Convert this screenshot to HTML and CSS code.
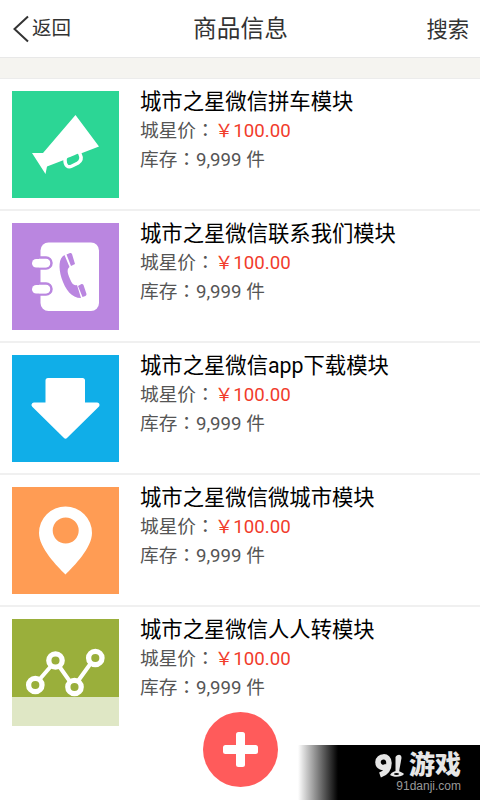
FILE: index.html
```html
<!DOCTYPE html>
<html lang="zh-CN">
<head>
<meta charset="utf-8">
<title>商品信息</title>
<link rel="stylesheet" href="styles.css">
</head>
<body>
<div class="app">
  <header class="bar">
    <div class="back">
      <svg class="chevron" width="18" height="28" viewBox="0 0 18 28"><path d="M16 1.500 2.500 14 16 26.500" fill="none" stroke="#333" stroke-width="2"/></svg>
      <span>返回</span>
    </div>
    <h1 class="title">商品信息</h1>
    <div class="search">搜索</div>
  </header>
  <div class="gap"></div>
  <main class="list">
    <article class="item">
      <svg class="thumb green" viewBox="0 0 107 107"><path fill="#fff" d="M63.500 24 87 55.500 35 75.500 33.500 83 20 62H31Z"/><path d="M53 69c0 6 3 8 7 6l6-3c3-2 4-5 2-9-1-3-3-2-7 0-5 2-8 2-8 6Z" fill="#2cd695" stroke="#fff" stroke-width="3.500"/></svg>
      <div class="info"><h2 class="name">城市之星微信拼车模块</h2><p class="line">城星价<span class="colon" lang="zh-TW">：</span><span class="price">￥100.00</span></p><p class="line">库存<span class="colon" lang="zh-TW">：</span>9,999 件</p></div>
    </article>
    <article class="item">
      <svg class="thumb purple" viewBox="0 0 107 107"><rect x="28.500" y="19.500" width="58.500" height="68.500" rx="8" fill="#fff"/><g fill="#fff" stroke="#ba86e0" stroke-width="2.500"><path d="M27 34.500h7a5.500 5.500 0 0 1 0 11h-7"/><path d="M27 60.500h7a5.500 5.500 0 0 1 0 11h-7"/></g><rect x="20" y="36" width="18" height="8.500" rx="4.250" fill="#fff"/><rect x="20" y="62" width="18" height="8.500" rx="4.250" fill="#fff"/><g fill="#ba86e0"><path d="M52.500 32c-6 3-6 13-3 23 4 12 10 20 19.500 20L65 62c-3 1-5-1-7-6-3-7-3-10-.5-12Z"/><path d="m54.500 31.500 3.500-1.500c1 0 1.500 0 2 1l3 10-4 2ZM66 63l3.500-2c1 0 1.500 0 2 1l3 9c0 1-.5 1.500-1 2l-3 1Z"/></g></svg>
      <div class="info"><h2 class="name">城市之星微信联系我们模块</h2><p class="line">城星价<span class="colon" lang="zh-TW">：</span><span class="price">￥100.00</span></p><p class="line">库存<span class="colon" lang="zh-TW">：</span>9,999 件</p></div>
    </article>
    <article class="item">
      <svg class="thumb blue" viewBox="0 0 107 107"><path d="M36 25.500H70.500V50H85L53.500 81 22 50H36Z" fill="#fff" stroke="#fff" stroke-width="5" stroke-linejoin="round"/></svg>
      <div class="info"><h2 class="name">城市之星微信app下载模块</h2><p class="line">城星价<span class="colon" lang="zh-TW">：</span><span class="price">￥100.00</span></p><p class="line">库存<span class="colon" lang="zh-TW">：</span>9,999 件</p></div>
    </article>
    <article class="item">
      <svg class="thumb orange" viewBox="0 0 107 107"><path fill="#fff" fill-rule="evenodd" d="M53.500 87.500C45 79 27 61 27 46a26.500 26.500 0 0 1 53 0C80 61 62 79 53.500 87.500ZM53.700 30.500a13 13 0 1 0 0 26 13 13 0 1 0 0-26Z"/></svg>
      <div class="info"><h2 class="name">城市之星微信微城市模块</h2><p class="line">城星价<span class="colon" lang="zh-TW">：</span><span class="price">￥100.00</span></p><p class="line">库存<span class="colon" lang="zh-TW">：</span>9,999 件</p></div>
    </article>
    <article class="item">
      <svg class="thumb olive" viewBox="0 0 107 107"><rect y="78" width="107" height="29" fill="#dfe7c5"/><g fill="none" stroke="#fff"><path stroke-width="4" d="m27 61 13-15M47 47l12 17M66 62l13-18"/><g stroke-width="5.300"><circle cx="23.300" cy="66" r="6.700"/><circle cx="43.500" cy="41.500" r="6.700"/><circle cx="62.500" cy="68" r="6.700"/><circle cx="83.300" cy="39" r="6.700"/></g></g></svg>
      <div class="info"><h2 class="name">城市之星微信人人转模块</h2><p class="line">城星价<span class="colon" lang="zh-TW">：</span><span class="price">￥100.00</span></p><p class="line">库存<span class="colon" lang="zh-TW">：</span>9,999 件</p></div>
    </article>
  </main>
  <div class="add"><svg width="75" height="75" viewBox="0 0 75 75"><circle cx="37.500" cy="37.500" r="37.500" fill="#ff5b5b"/><rect x="33" y="20" width="9" height="35" rx="2.500" fill="#fff"/><rect x="20" y="33" width="35" height="9" rx="2.500" fill="#fff"/></svg></div>
  <div class="mark">
    <div class="brand">
      <svg width="31" height="24" viewBox="0 0 31 24"><g fill="none" stroke="#e6e6e6" stroke-width="5.500"><path d="M13 12c-4 3-9 1-9-4 0-6 11-8 11 1 0 6-3 10-9 12"/></g><path d="M21.500 3c2-3 6-3 6 1L25 18h-3.500Z" fill="#e6e6e6"/><path d="M16 21c2-3 4-4 7-4s6 2 7 3c-2 3-10 4-14 1Z" fill="#e6e6e6"/><ellipse cx="22.500" cy="20" rx="2.500" ry="1" fill="#000"/></svg>
      <span>游戏</span>
    </div>
    <div class="site">91danji.com</div>
  </div>
</div>
</body>
</html>
```
FILE: styles.css
```css
* { box-sizing: border-box; margin: 0; padding: 0; }
body { background: #fff; font-family: Roboto, "Noto Sans CJK SC", sans-serif; }
.app { position: relative; width: 480px; height: 800px; overflow: hidden; }
svg { display: block; flex: none; }
.bar {
  display: grid;
  grid-template-columns: 1fr auto 1fr;
  align-items: center;
  height: 57px;
  padding: 0 11px 0 12px;
  color: #333;
}
.back { display: flex; align-items: center; gap: 2px; font-size: 19.5px; line-height: 28px; }
.back span { padding-top: 1px; }
.title { font-size: 23.7px; font-weight: 400; line-height: 34px; }
.search { justify-self: end; font-size: 21.3px; line-height: 30px; padding-top: 2px; }
.gap { height: 22px; background: #f5f4f0; border-top: 1px solid #e8e8e8; border-bottom: 1px solid #ececec; }
.item { display: flex; gap: 21px; height: 132px; padding: 12px 12px 0; border-bottom: 2px solid #f0f0f0; }
.item:last-child { border-bottom: 0; }
.thumb { width: 107px; height: 107px; }
.green { background: #2cd695; }
.purple { background: #ba86e0; }
.blue { background: #10aee8; }
.orange { background: #ff9c54; }
.olive { background: #9aaf3b; }
.name { margin-top: -4px; color: #000; font-size: 21.33px; font-weight: 400; line-height: 30px; white-space: nowrap; }
.line { color: #555; font-size: 18.67px; line-height: 29px; white-space: nowrap; }
.colon { font-family: "Noto Sans CJK TC", sans-serif; line-height: 1; }
.price { color: #f13c2b; }
.add { position: absolute; left: 203px; top: 712px; }
.mark {
  position: absolute;
  right: 0;
  bottom: 0;
  width: 182px;
  height: 55px;
  padding: 8px 19px 0 0;
  background: linear-gradient(90deg, #fff 0, #000 40px);
  display: flex;
  flex-direction: column;
  align-items: flex-end;
}
.brand { display: flex; align-items: center; gap: 4px; height: 25px; color: #e6e6e6; font-size: 26px; font-weight: 900; line-height: 25px; }
.site { color: #999; font-family: "Liberation Sans", sans-serif; font-size: 12px; line-height: 17px; }
```
